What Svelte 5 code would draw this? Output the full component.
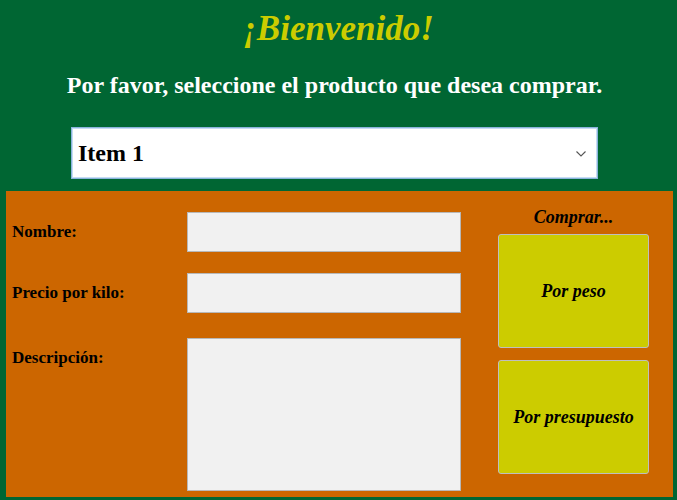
<script>
  let producto = $state('Item 1');
  let nombre = $state('');
  let precio = $state('');
  let descripcion = $state('');
</script>

<main>
  <header>
    <h1>¡Bienvenido!</h1>
    <label class="prompt" for="producto">Por favor, seleccione el producto que desea comprar.</label>
    <div class="picker">
      <select id="producto" bind:value={producto}>
        <option>Item 1</option>
        <option>Item 2</option>
        <option>Item 3</option>
        <option>Item 4</option>
      </select>
      <svg class="chevron" viewBox="0 0 10 6" aria-hidden="true">
        <path d="M0.5 0.5 L5 5 L9.5 0.5" />
      </svg>
    </div>
  </header>

  <section class="panel">
    <div class="fields">
      <div class="row">
        <label for="nombre">Nombre:</label>
        <input id="nombre" type="text" readonly bind:value={nombre} />
      </div>
      <div class="row">
        <label for="precio">Precio por kilo:</label>
        <input id="precio" type="text" readonly bind:value={precio} />
      </div>
      <div class="row tall">
        <label for="descripcion">Descripción:</label>
        <textarea id="descripcion" readonly bind:value={descripcion}></textarea>
      </div>
    </div>
    <div class="actions">
      <h2>Comprar...</h2>
      <button type="button">Por peso</button>
      <button type="button">Por presupuesto</button>
    </div>
  </section>
</main>

<style>
  :global(body) {
    background: #006633;
  }

  main {
    box-sizing: border-box;
    padding: 8px 4px 3px 6px;
    font-family: "Rockwell Condensed", "Liberation Serif", serif;
    font-weight: bold;
    color: #000;
  }

  header {
    display: flex;
    flex-direction: column;
    padding: 0 75px 12px 65px;
  }

  h1 {
    margin: 0;
    padding-left: 8px;
    font-size: 35px;
    line-height: 42px;
    font-style: italic;
    text-align: center;
    color: #cccc00;
  }

  .prompt {
    margin: 22px -8px 29px;
    font-size: 24px;
    line-height: 26px;
    text-align: center;
    color: #fff;
  }

  .picker {
    position: relative;
  }

  select {
    display: block;
    box-sizing: border-box;
    width: 100%;
    height: 52px;
    padding: 0 32px 0 6px;
    border: 1px solid #8ab4dc;
    border-radius: 0;
    box-shadow: inset 0 0 0 1px #c5dcf3;
    appearance: none;
    background: #fff;
    font: inherit;
    font-size: 24px;
    color: #000;
  }

  .chevron {
    position: absolute;
    top: 24px;
    right: 12px;
    width: 10px;
    height: 6px;
    fill: none;
    stroke: #555;
    stroke-width: 1.1;
    pointer-events: none;
  }

  .panel {
    display: flex;
    gap: 37px;
    padding: 15px 24px 6px 6px;
    background: #cc6600;
  }

  .fields {
    flex: 1;
    display: flex;
    flex-direction: column;
    gap: 21px;
    padding-top: 6px;
  }

  .row {
    display: grid;
    grid-template-columns: 175px 1fr;
    align-items: center;
    font-size: 17px;
    line-height: 40px;
  }

  .tall {
    align-items: start;
    padding-top: 4px;
  }

  input,
  textarea {
    display: block;
    box-sizing: border-box;
    width: 100%;
    min-width: 0;
    height: 40px;
    margin: 0;
    padding: 4px 6px;
    border: 1px solid #b8b8b8;
    border-radius: 0;
    background: #f1f1f1;
    font: inherit;
    color: #000;
  }

  textarea {
    height: 153px;
    line-height: 22px;
    resize: none;
  }

  .actions {
    width: 151px;
    display: flex;
    flex-direction: column;
    gap: 12px;
    font-family: "Liberation Serif", serif;
    font-style: italic;
  }

  h2 {
    margin: 0 0 -4px;
    font-size: 18px;
    line-height: 20px;
    padding-top: 1px;
    box-sizing: border-box;
    height: 20px;
    text-align: center;
  }

  button {
    height: 114px;
    padding: 0;
    border: 1px solid #bfbfbf;
    border-radius: 3px;
    background: #cccc00;
    font: inherit;
    font-size: 18px;
    color: #000;
  }
</style>
